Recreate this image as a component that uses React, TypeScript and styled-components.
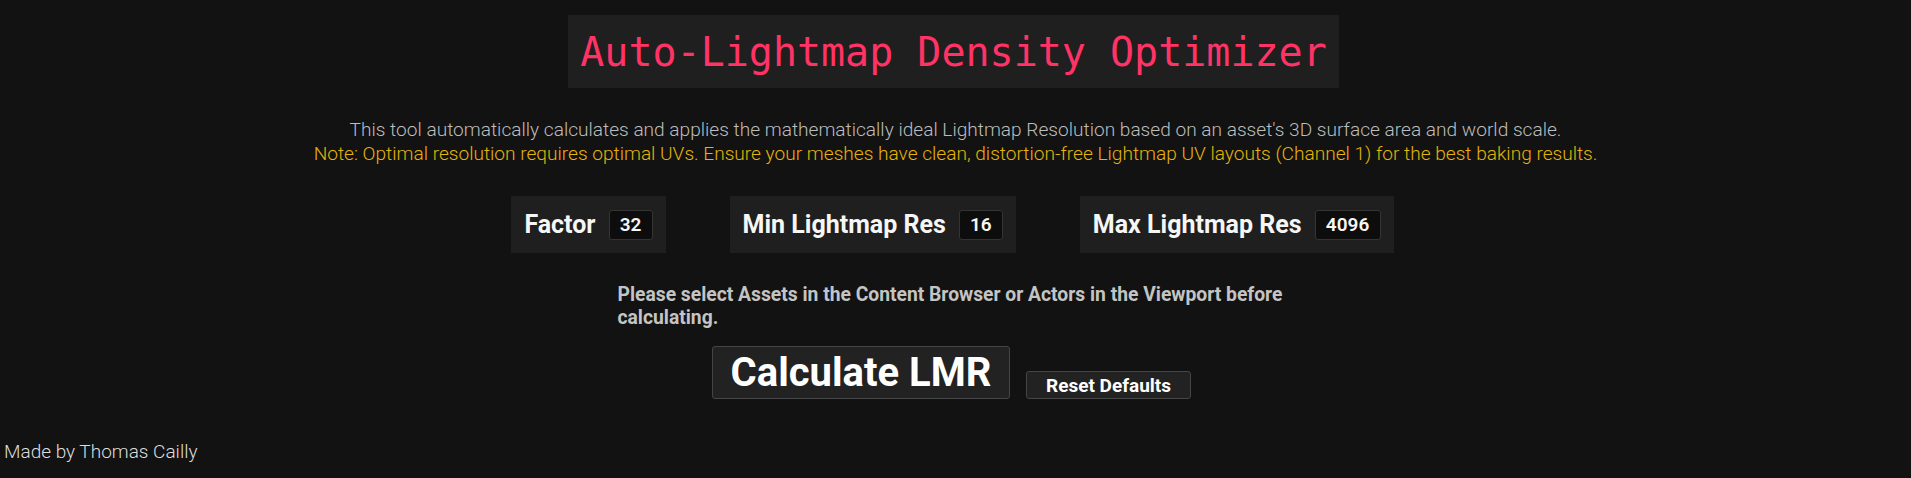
import styled, { createGlobalStyle } from 'styled-components'

const GlobalStyle = createGlobalStyle`
  html, body {
    margin: 0;
    padding: 0;
    background: #121212;
  }

  body {
    font-family: Roboto, 'Noto Sans', sans-serif;
    color: #d8d8d8;
  }
`

const Page = styled.div`
  display: flex;
  flex-direction: column;
  align-items: center;
  width: 1911px;
  height: 478px;
  padding-top: 15px;
  box-sizing: border-box;
`

const Title = styled.h1`
  margin: 0 0 0 -4px;
  padding: 0 12px;
  height: 73px;
  display: flex;
  align-items: center;
  background: #1f1f1f;
  color: #ff3366;
  font-family: 'DejaVu Sans Mono', 'Liberation Mono', monospace;
  font-size: 40px;
  font-weight: 400;
`

const Intro = styled.div`
  margin-top: 30px;
  text-align: center;
  font-size: 19.1px;
  font-weight: 300;
  line-height: 24px;
`

const IntroLine = styled.p<{ $note?: boolean }>`
  margin: 0;
  white-space: nowrap;
  color: ${(p) => (p.$note ? '#e6b40a' : '#bdbdbd')};
`

const Settings = styled.div`
  display: flex;
  gap: 64px;
  margin-top: 30px;
  margin-left: -6px;
`

const Setting = styled.div`
  display: flex;
  align-items: center;
  gap: 13px;
  height: 57px;
  padding: 0 13px 0 13px;
  background: #1f1f1f;
`

const Label = styled.span`
  color: #f6f6f6;
  font-size: 25px;
  font-weight: 700;
`

const Value = styled.span<{ $w: number }>`
  box-sizing: border-box;
  width: ${(p) => p.$w}px;
  height: 30px;
  display: flex;
  align-items: center;
  justify-content: center;
  background: #0d0d0d;
  border: 1px solid #343434;
  border-radius: 3px;
  color: #f6f6f6;
  font-size: 19px;
  font-weight: 600;
`

const Message = styled.p`
  margin: 30px 0 0 4px;
  width: 680px;
  color: #c4c4c4;
  font-size: 19.3px;
  font-weight: 700;
  line-height: 23px;
`

const Actions = styled.div`
  display: flex;
  align-items: flex-end;
  gap: 16px;
  margin-top: 17px;
  margin-left: -8px;
`

const Button = styled.button<{ $big?: boolean }>`
  box-sizing: border-box;
  height: ${(p) => (p.$big ? 53 : 28)}px;
  padding: 0 16px;
  min-width: ${(p) => (p.$big ? 298 : 165)}px;
  background: #222222;
  border: 1px solid #454545;
  border-radius: 3px;
  color: #ffffff;
  font-family: Roboto, 'Noto Sans', sans-serif;
  font-size: ${(p) => (p.$big ? 40 : 19)}px;
  font-weight: 700;
  cursor: pointer;
`

const Footer = styled.div`
  align-self: flex-start;
  margin-top: auto;
  padding: 0 0 14px 4px;
  color: #dddddd;
  font-size: 19px;
  font-weight: 300;
  line-height: 24px;
`

const App = () => {
  return (
    <>
      <GlobalStyle />
      <Page>
        <Title>Auto-Lightmap Density Optimizer</Title>
        <Intro>
          <IntroLine>
            This tool automatically calculates and applies the mathematically ideal Lightmap
            Resolution based on an asset's 3D surface area and world scale.
          </IntroLine>
          <IntroLine $note>
            Note: Optimal resolution requires optimal UVs. Ensure your meshes have clean,
            distortion-free Lightmap UV layouts (Channel 1) for the best baking results.
          </IntroLine>
        </Intro>
        <Settings>
          <Setting>
            <Label>Factor</Label>
            <Value $w={44}>32</Value>
          </Setting>
          <Setting>
            <Label>Min Lightmap Res</Label>
            <Value $w={44}>16</Value>
          </Setting>
          <Setting>
            <Label>Max Lightmap Res</Label>
            <Value $w={66}>4096</Value>
          </Setting>
        </Settings>
        <Message>
          Please select Assets in the Content Browser or Actors in the Viewport before
          calculating.
        </Message>
        <Actions>
          <Button $big>Calculate LMR</Button>
          <Button>Reset Defaults</Button>
        </Actions>
        <Footer>Made by Thomas Cailly</Footer>
      </Page>
    </>
  )
}

export default App
